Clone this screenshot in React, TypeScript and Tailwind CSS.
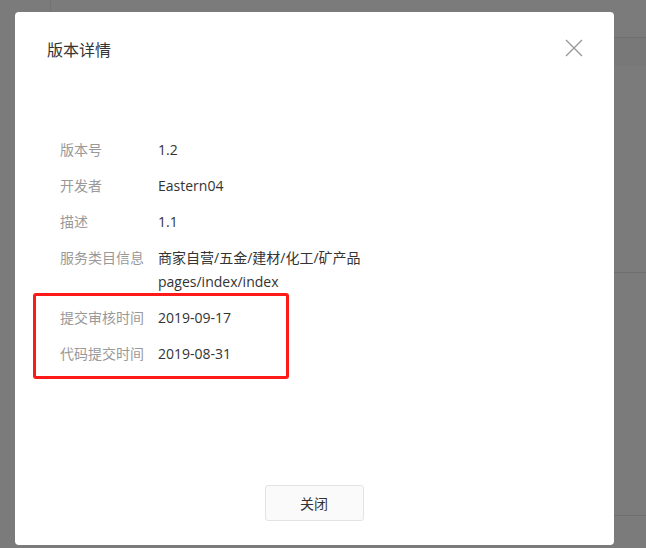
import React from "react";

const rows: { label: string; value: string[] }[] = [
  { label: "版本号", value: ["1.2"] },
  { label: "开发者", value: ["Eastern04"] },
  { label: "描述", value: ["1.1"] },
  { label: "服务类目信息", value: ["商家自营/五金/建材/化工/矿产品", "pages/index/index"] },
  { label: "提交审核时间", value: ["2019-09-17"] },
  { label: "代码提交时间", value: ["2019-08-31"] },
];

export default function App() {
  return (
    <div
      className="relative w-[646px] h-[548px] overflow-hidden bg-[#7b7b7b]"
      style={{ fontFamily: '"Open Sans", "Noto Sans CJK SC", sans-serif' }}
    >
      {/* faint underlying page */}
      <div className="absolute left-[50px] top-0 w-px h-[12px] bg-[#737373]" />
      <div className="absolute right-0 top-[37px] w-[40px] h-px bg-[#6f6f6f]" />
      <div className="absolute right-0 top-[38px] w-[40px] h-[28px] bg-[#787878]" />
      <div className="absolute right-0 top-[272px] w-[40px] h-px bg-[#6f6f6f]" />
      <div className="absolute right-0 top-[515px] w-[40px] h-px bg-[#6f6f6f]" />

      <div className="relative pt-[12px] pl-[15px]">
        <div className="relative w-[599px] h-[533px] bg-white rounded-[4px] flex flex-col">
          <div className="flex items-center justify-between pt-[26px] pl-[32px] pr-[31px]">
            <div className="text-[16px] leading-[24px] text-[#333]">版本详情</div>
            <svg width="18" height="18" viewBox="0 0 18 18" className="-mt-[4px]">
              <path d="M1 1 L17 17 M17 1 L1 17" stroke="#9a9a9a" strokeWidth="1.4" fill="none" />
            </svg>
          </div>

          <div className="mt-[76px] pl-[45px] flex flex-col gap-[12px] text-[14px] leading-[24px]">
            {rows.map((r) => (
              <div key={r.label} className="flex">
                <div className="w-[98px] shrink-0 text-[#999]">{r.label}</div>
                <div className="text-[#333]">
                  {r.value.map((v) => (
                    <div key={v}>{v}</div>
                  ))}
                </div>
              </div>
            ))}
          </div>

          <div className="absolute left-[18px] top-[281px] w-[256px] h-[86px] border-[3px] border-[#ff1a1a] rounded-[3px]" />

          <div className="mt-auto pb-[24px] flex justify-center">
            <button className="w-[99px] h-[36px] border border-[#e3e3e3] bg-[#fafafa] rounded-[3px] text-[14px] text-[#333] -ml-[1px]">
              关闭
            </button>
          </div>
        </div>
      </div>
    </div>
  );
}
